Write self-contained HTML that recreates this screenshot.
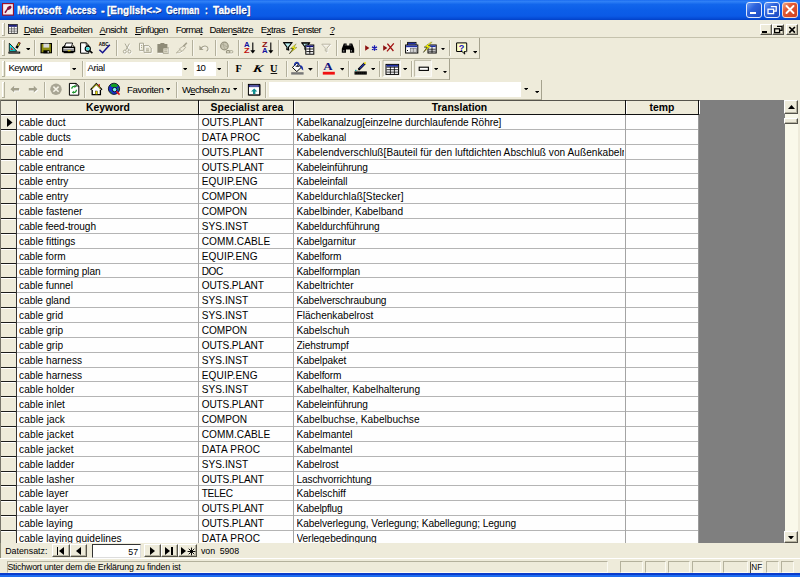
<!DOCTYPE html>
<html><head><meta charset="utf-8"><title>Microsoft Access</title>
<style>
html,body{margin:0;padding:0}
body{width:800px;height:577px;overflow:hidden;background:#EEEBDA;font-family:'Liberation Sans',sans-serif;position:relative}
div,span,svg{position:absolute;box-sizing:border-box}
span{white-space:pre;color:#000}
</style></head>
<body>
<div style="left:0;top:0;width:800px;height:20px;background:linear-gradient(#1c6cf0 0%,#2f80f6 8%,#1266ec 22%,#0c5ee8 50%,#0b5ae6 80%,#0448d2 95%,#0340c4 100%)"></div>
<svg style="left:2px;top:3px" width="12" height="12.7" viewBox="0 0 13 13" preserveAspectRatio="none"><rect x="0" y="0" width="13" height="13" fill="#98102c"/><rect x="1.2" y="1.2" width="10.6" height="10.6" fill="#f7eef0"/><path d="M2.5 9.5 L5 6.5 L6 4 L9 2.5 L10.5 4 L9 6.5 L6 7.5 L4 10.5 Z" fill="#86103c"/></svg>
<span style="left:17px;top:3px;font-size:11px;line-height:14px;font-weight:bold;color:#fff;transform:scaleX(0.8949);transform-origin:0 0;text-shadow:1px 1px 0 #0a2a80;-webkit-text-stroke:0.3px #fff">Microsoft</span>
<span style="left:66px;top:3px;font-size:11px;line-height:14px;font-weight:bold;color:#fff;transform:scaleX(0.7861);transform-origin:0 0;text-shadow:1px 1px 0 #0a2a80;-webkit-text-stroke:0.3px #fff">Access</span>
<span style="left:100.6px;top:3px;font-size:11px;line-height:14px;font-weight:bold;color:#fff;transform:scaleX(1.0077);transform-origin:0 0;text-shadow:1px 1px 0 #0a2a80;-webkit-text-stroke:0.3px #fff">-</span>
<span style="left:107px;top:3px;font-size:11px;line-height:14px;font-weight:bold;color:#fff;transform:scaleX(0.9064);transform-origin:0 0;text-shadow:1px 1px 0 #0a2a80;-webkit-text-stroke:0.3px #fff">[English&lt;-&gt;</span>
<span style="left:166px;top:3px;font-size:11px;line-height:14px;font-weight:bold;color:#fff;transform:scaleX(0.8009);transform-origin:0 0;text-shadow:1px 1px 0 #0a2a80;-webkit-text-stroke:0.3px #fff">German</span>
<span style="left:204.8px;top:3px;font-size:11px;line-height:14px;font-weight:bold;color:#fff;transform:scaleX(0.7626);transform-origin:0 0;text-shadow:1px 1px 0 #0a2a80;-webkit-text-stroke:0.3px #fff">:</span>
<span style="left:213px;top:3px;font-size:11px;line-height:14px;font-weight:bold;color:#fff;transform:scaleX(0.9150);transform-origin:0 0;text-shadow:1px 1px 0 #0a2a80;-webkit-text-stroke:0.3px #fff">Tabelle]</span>
<div style="left:746px;top:2px;width:16px;height:16px;border:1px solid #dfe8fb;border-radius:3px;background:linear-gradient(135deg,#6c9cf4 0%,#2c62dc 40%,#1c48c0 100%)"></div>
<div style="left:764px;top:2px;width:16px;height:16px;border:1px solid #dfe8fb;border-radius:3px;background:linear-gradient(135deg,#6c9cf4 0%,#2c62dc 40%,#1c48c0 100%)"></div>
<div style="left:782px;top:2px;width:16px;height:16px;border:1px solid #f6d8cc;border-radius:3px;background:linear-gradient(135deg,#f0a888 0%,#e25a35 35%,#cc4020 100%)"></div>
<div style="left:750px;top:12px;width:5.5px;height:2.2px;background:#fff;"></div>
<svg style="left:764px;top:2px" width="16" height="16" viewBox="0 0 16 16"><path d="M6.8 4.6h5.4v4.6h-2.2" fill="none" stroke="#fff" stroke-width="1.3"/><rect x="4" y="7.2" width="5.6" height="4.400" fill="none" stroke="#fff" stroke-width="1.3"/></svg>
<svg style="left:782px;top:2px" width="16" height="16" viewBox="0 0 16 16"><path d="M4.5 4l7 7M11.5 4l-7 7" stroke="#fff" stroke-width="1.9" stroke-linecap="round"/></svg>
<div style="left:1.5px;top:22.5px;width:1px;height:12.5px;background:#fff;"></div>
<div style="left:2.5px;top:22.5px;width:1.2px;height:1px;background:#fff;"></div>
<div style="left:3.6px;top:22.5px;width:1px;height:13px;background:#b4b19c;"></div>
<div style="left:1.5px;top:35px;width:3px;height:1px;background:#b4b19c;"></div>
<svg style="left:8.300px;top:23.800px" width="9.800" height="9.800" viewBox="0 0 11 11"><rect x="0.5" y="0.5" width="10" height="10" fill="#fff" stroke="#222" stroke-width="1"/><rect x="1" y="1" width="9" height="2.2" fill="#20207c"/><path d="M1 5.5h9M1 8h9M4 3v7.5M7 3v7.5" stroke="#444" stroke-width="0.8"/></svg>
<span style="left:23.7px;top:23px;font-size:9.6px;line-height:13px;letter-spacing:-0.621px"><u>D</u>atei</span>
<span style="left:50.6px;top:23px;font-size:9.6px;line-height:13px;letter-spacing:-0.461px"><u>B</u>earbeiten</span>
<span style="left:99.6px;top:23px;font-size:9.6px;line-height:13px;letter-spacing:-0.596px"><u>A</u>nsicht</span>
<span style="left:135px;top:23px;font-size:9.6px;line-height:13px;letter-spacing:-0.647px"><u>E</u>infügen</span>
<span style="left:175.7px;top:23px;font-size:9.6px;line-height:13px;letter-spacing:-0.632px">Forma<u>t</u></span>
<span style="left:209.4px;top:23px;font-size:9.6px;line-height:13px;letter-spacing:-0.493px">Daten<u>s</u>ätze</span>
<span style="left:260.8px;top:23px;font-size:9.6px;line-height:13px;letter-spacing:-0.501px">E<u>x</u>tras</span>
<span style="left:292.6px;top:23px;font-size:9.6px;line-height:13px;letter-spacing:-0.562px"><u>F</u>enster</span>
<span style="left:329.8px;top:23px;font-size:9.6px;line-height:13px;letter-spacing:-0.844px"><u>?</u></span>
<div style="left:759.5px;top:23.5px;width:12.2px;height:11.4px;background:#EEEBDA;border-top:1px solid #fff;border-left:1px solid #fff;border-right:1px solid #55534a;border-bottom:1px solid #55534a;box-shadow:inset -1px -1px 0 #b5b2a0"></div>
<div style="left:771.7px;top:23.5px;width:12.3px;height:11.4px;background:#EEEBDA;border-top:1px solid #fff;border-left:1px solid #fff;border-right:1px solid #55534a;border-bottom:1px solid #55534a;box-shadow:inset -1px -1px 0 #b5b2a0"></div>
<div style="left:785.5px;top:23.5px;width:12.3px;height:11.4px;background:#EEEBDA;border-top:1px solid #fff;border-left:1px solid #fff;border-right:1px solid #55534a;border-bottom:1px solid #55534a;box-shadow:inset -1px -1px 0 #b5b2a0"></div>
<div style="left:762.3px;top:31.3px;width:4.8px;height:1.7px;background:#000;"></div>
<svg style="left:771.7px;top:23.5px" width="13" height="12" viewBox="0 0 13 12"><path d="M5 2.3h5v4h-2" fill="none" stroke="#000" stroke-width="1.3"/><rect x="2.6" y="4.8" width="5" height="3.8" fill="none" stroke="#000" stroke-width="1.3"/></svg>
<svg style="left:785.5px;top:23.5px" width="13" height="12" viewBox="0 0 13 12"><path d="M3.3 3l5.6 5.6M8.9 3L3.3 8.6" stroke="#000" stroke-width="1.7"/></svg>
<div style="left:0px;top:37px;width:800px;height:1px;background:#c5c2ad;"></div>
<div style="left:0px;top:57.5px;width:479.5px;height:1px;background:#b4b19c;"></div>
<div style="left:479.0px;top:38px;width:1px;height:20.5px;background:#a5a28e;"></div>
<div style="left:1.5px;top:40px;width:1px;height:15.0px;background:#fff;"></div>
<div style="left:2.5px;top:40px;width:1.2px;height:1px;background:#fff;"></div>
<div style="left:3.6px;top:40px;width:1px;height:15.5px;background:#b4b19c;"></div>
<div style="left:1.5px;top:55.0px;width:3px;height:1px;background:#b4b19c;"></div>
<div style="left:0px;top:78.5px;width:449.5px;height:1px;background:#b4b19c;"></div>
<div style="left:449.0px;top:59px;width:1px;height:20.5px;background:#a5a28e;"></div>
<div style="left:1.5px;top:61px;width:1px;height:15.0px;background:#fff;"></div>
<div style="left:2.5px;top:61px;width:1.2px;height:1px;background:#fff;"></div>
<div style="left:3.6px;top:61px;width:1px;height:15.5px;background:#b4b19c;"></div>
<div style="left:1.5px;top:76.0px;width:3px;height:1px;background:#b4b19c;"></div>
<div style="left:0px;top:99px;width:541px;height:1px;background:#b4b19c;"></div>
<div style="left:540.5px;top:80px;width:1px;height:20px;background:#a5a28e;"></div>
<div style="left:1.5px;top:82px;width:1px;height:14.5px;background:#fff;"></div>
<div style="left:2.5px;top:82px;width:1.2px;height:1px;background:#fff;"></div>
<div style="left:3.6px;top:82px;width:1px;height:15px;background:#b4b19c;"></div>
<div style="left:1.5px;top:96.5px;width:3px;height:1px;background:#b4b19c;"></div>
<div style="left:34.0px;top:40px;width:1px;height:16px;background:#b3b09c;"></div>
<div style="left:35.0px;top:40px;width:1px;height:16px;background:#f8f7ee;"></div>
<div style="left:56.5px;top:40px;width:1px;height:16px;background:#b3b09c;"></div>
<div style="left:57.5px;top:40px;width:1px;height:16px;background:#f8f7ee;"></div>
<div style="left:115.5px;top:40px;width:1px;height:16px;background:#b3b09c;"></div>
<div style="left:116.5px;top:40px;width:1px;height:16px;background:#f8f7ee;"></div>
<div style="left:191.5px;top:40px;width:1px;height:16px;background:#b3b09c;"></div>
<div style="left:192.5px;top:40px;width:1px;height:16px;background:#f8f7ee;"></div>
<div style="left:214.5px;top:40px;width:1px;height:16px;background:#b3b09c;"></div>
<div style="left:215.5px;top:40px;width:1px;height:16px;background:#f8f7ee;"></div>
<div style="left:237.5px;top:40px;width:1px;height:16px;background:#b3b09c;"></div>
<div style="left:238.5px;top:40px;width:1px;height:16px;background:#f8f7ee;"></div>
<div style="left:277.5px;top:40px;width:1px;height:16px;background:#b3b09c;"></div>
<div style="left:278.5px;top:40px;width:1px;height:16px;background:#f8f7ee;"></div>
<div style="left:336.0px;top:40px;width:1px;height:16px;background:#b3b09c;"></div>
<div style="left:337.0px;top:40px;width:1px;height:16px;background:#f8f7ee;"></div>
<div style="left:358.5px;top:40px;width:1px;height:16px;background:#b3b09c;"></div>
<div style="left:359.5px;top:40px;width:1px;height:16px;background:#f8f7ee;"></div>
<div style="left:399.5px;top:40px;width:1px;height:16px;background:#b3b09c;"></div>
<div style="left:400.5px;top:40px;width:1px;height:16px;background:#f8f7ee;"></div>
<div style="left:449.0px;top:40px;width:1px;height:16px;background:#b3b09c;"></div>
<div style="left:450.0px;top:40px;width:1px;height:16px;background:#f8f7ee;"></div>
<div style="left:81.5px;top:61px;width:1px;height:16px;background:#b3b09c;"></div>
<div style="left:82.5px;top:61px;width:1px;height:16px;background:#f8f7ee;"></div>
<div style="left:227.0px;top:61px;width:1px;height:16px;background:#b3b09c;"></div>
<div style="left:228.0px;top:61px;width:1px;height:16px;background:#f8f7ee;"></div>
<div style="left:285.5px;top:61px;width:1px;height:16px;background:#b3b09c;"></div>
<div style="left:286.5px;top:61px;width:1px;height:16px;background:#f8f7ee;"></div>
<div style="left:316.5px;top:61px;width:1px;height:16px;background:#b3b09c;"></div>
<div style="left:317.5px;top:61px;width:1px;height:16px;background:#f8f7ee;"></div>
<div style="left:347.5px;top:61px;width:1px;height:16px;background:#b3b09c;"></div>
<div style="left:348.5px;top:61px;width:1px;height:16px;background:#f8f7ee;"></div>
<div style="left:378.5px;top:61px;width:1px;height:16px;background:#b3b09c;"></div>
<div style="left:379.5px;top:61px;width:1px;height:16px;background:#f8f7ee;"></div>
<div style="left:410.5px;top:61px;width:1px;height:16px;background:#b3b09c;"></div>
<div style="left:411.5px;top:61px;width:1px;height:16px;background:#f8f7ee;"></div>
<div style="left:43.5px;top:82px;width:1px;height:16px;background:#b3b09c;"></div>
<div style="left:44.5px;top:82px;width:1px;height:16px;background:#f8f7ee;"></div>
<div style="left:83.5px;top:82px;width:1px;height:16px;background:#b3b09c;"></div>
<div style="left:84.5px;top:82px;width:1px;height:16px;background:#f8f7ee;"></div>
<div style="left:175.5px;top:82px;width:1px;height:16px;background:#b3b09c;"></div>
<div style="left:176.5px;top:82px;width:1px;height:16px;background:#f8f7ee;"></div>
<div style="left:241.5px;top:82px;width:1px;height:16px;background:#b3b09c;"></div>
<div style="left:242.5px;top:82px;width:1px;height:16px;background:#f8f7ee;"></div>
<div style="left:264.5px;top:82px;width:1px;height:16px;background:#b3b09c;"></div>
<div style="left:265.5px;top:82px;width:1px;height:16px;background:#f8f7ee;"></div>
<div style="left:6px;top:61.8px;width:64px;height:14.6px;background:#fff"></div>
<span style="left:8.6px;top:61.599999999999994px;font-size:9.6px;line-height:12px;letter-spacing:-0.618px;">Keyword</span>
<div style="left:86px;top:61.8px;width:95.5px;height:14.6px;background:#fff"></div>
<span style="left:87.6px;top:61.599999999999994px;font-size:9.6px;line-height:12px;letter-spacing:-0.441px;">Arial</span>
<div style="left:194px;top:61.8px;width:21.5px;height:14.6px;background:#fff"></div>
<span style="left:196px;top:61.599999999999994px;font-size:9.6px;line-height:12px;letter-spacing:-0.936px;">10</span>
<div style="left:269px;top:82.3px;width:252px;height:14.6px;background:#fff"></div>
<span style="left:127px;top:83.5px;font-size:9.6px;line-height:12px;letter-spacing:-0.389px;">Favoriten</span>
<span style="left:182px;top:83.500px;font-size:9.600px;line-height:12px;letter-spacing:-0.659px">W<u>e</u>chseln zu</span>
<svg style="left:25.6px;top:47.8px" width="4.6" height="2.5999999999999996" viewBox="0 0 4.6 2.5999999999999996"><path d="M0 0h4.6L2.3 2.5999999999999996z" fill="#000"/></svg>
<svg style="left:441px;top:48px" width="4" height="2.3" viewBox="0 0 4 2.3"><path d="M0 0h4L2.0 2.3z" fill="#000"/></svg>
<svg style="left:472.6px;top:51px" width="4.4" height="2.5" viewBox="0 0 4.4 2.5"><path d="M0 0h4.4L2.2 2.5z" fill="#000"/></svg>
<svg style="left:71.8px;top:67.8px" width="4.4" height="2.5" viewBox="0 0 4.4 2.5"><path d="M0 0h4.4L2.2 2.5z" fill="#000"/></svg>
<svg style="left:183px;top:67.8px" width="4.4" height="2.5" viewBox="0 0 4.4 2.5"><path d="M0 0h4.4L2.2 2.5z" fill="#000"/></svg>
<svg style="left:217px;top:67.8px" width="4.4" height="2.5" viewBox="0 0 4.4 2.5"><path d="M0 0h4.4L2.2 2.5z" fill="#000"/></svg>
<svg style="left:308px;top:68.2px" width="4.8" height="2.6999999999999997" viewBox="0 0 4.8 2.6999999999999997"><path d="M0 0h4.8L2.4 2.6999999999999997z" fill="#000"/></svg>
<svg style="left:339.6px;top:68.2px" width="4.6" height="2.5999999999999996" viewBox="0 0 4.6 2.5999999999999996"><path d="M0 0h4.6L2.3 2.5999999999999996z" fill="#000"/></svg>
<svg style="left:371.2px;top:68px" width="4.2" height="2.4" viewBox="0 0 4.2 2.4"><path d="M0 0h4.2L2.1 2.4z" fill="#000"/></svg>
<svg style="left:402.6px;top:68px" width="4.2" height="2.4" viewBox="0 0 4.2 2.4"><path d="M0 0h4.2L2.1 2.4z" fill="#000"/></svg>
<svg style="left:433.8px;top:68px" width="4.2" height="2.4" viewBox="0 0 4.2 2.4"><path d="M0 0h4.2L2.1 2.4z" fill="#000"/></svg>
<svg style="left:442.9px;top:70.7px" width="4" height="2.3" viewBox="0 0 4 2.3"><path d="M0 0h4L2.0 2.3z" fill="#000"/></svg>
<svg style="left:166px;top:88.2px" width="4.2" height="2.4" viewBox="0 0 4.2 2.4"><path d="M0 0h4.2L2.1 2.4z" fill="#000"/></svg>
<svg style="left:233px;top:88.2px" width="4.2" height="2.4" viewBox="0 0 4.2 2.4"><path d="M0 0h4.2L2.1 2.4z" fill="#000"/></svg>
<svg style="left:524px;top:88px" width="4.2" height="2.4" viewBox="0 0 4.2 2.4"><path d="M0 0h4.2L2.1 2.4z" fill="#000"/></svg>
<svg style="left:535px;top:91px" width="4.2" height="2.4" viewBox="0 0 4.2 2.4"><path d="M0 0h4.2L2.1 2.4z" fill="#000"/></svg>
<svg style="left:0;top:0" width="800" height="577" viewBox="0 0 800 577"><path d="M9.3 43.2L9.3 51.2L16.8 51.2Z" fill="#10f4f4" stroke="#000" stroke-width="0.850"/><path d="M10.700 46.800v3.200h3z" fill="#d02020"/><rect x="8.4" y="51.6" width="11.8" height="2" fill="#000"/><rect x="9.2" y="52.3" width="10" height="0.5" fill="#999"/><path d="M19.6 42.6L16.4 48.2" stroke="#000" stroke-width="2.4"/><path d="M19.3 43.2L17.8 45.8" stroke="#e8e020" stroke-width="1.2"/><path d="M19.9 42.3l-.5.9" stroke="#c02020" stroke-width="1.6"/><rect x="40.5" y="43" width="11.5" height="10.3" fill="#000"/><rect x="41.6" y="44" width="9.3" height="8.3" fill="#8c8c10"/><rect x="43.4" y="43.6" width="5.8" height="4" fill="#d8d8d8"/><rect x="43.4" y="50.3" width="6.2" height="3" fill="#000"/><rect x="47.6" y="51" width="1.2" height="1.7" fill="#e8e8e8"/><path d="M65.8 43h6.8l-1.2 4h-7z" fill="#fff" stroke="#000" stroke-width="0.9"/><path d="M62.6 47.4h12v4.200h-12z" fill="#8c8c8c" stroke="#000" stroke-width="1.200"/><path d="M63.6 51.6h10v1.6h-10z" fill="#000"/><rect x="63.600" y="48.200" width="10" height="0.900" fill="#e8e8e8"/><rect x="67.8" y="50.3" width="2.6" height="1" fill="#e8e000"/><path d="M62.8 47.4l2-2.2M74.4 47.4l-1.4-2.2" stroke="#000" stroke-width="0.9"/><path d="M80.6 42.8h5.6l2.6 2.6v7.8h-8.2z" fill="#fff" stroke="#000" stroke-width="1"/><path d="M86.2 42.8v2.6h2.6" fill="none" stroke="#000" stroke-width="0.8"/><circle cx="87.8" cy="48.8" r="2.6" fill="#a0f0f0" stroke="#000" stroke-width="1.1"/><circle cx="87.6" cy="48.6" r="1.2" fill="#20d8e0"/><path d="M89.8 50.8l2.6 2.4" stroke="#000" stroke-width="1.6"/><text x="98.8" y="46.4" font-family="Liberation Sans,sans-serif" font-size="4.6" font-weight="bold" textLength="9.6" lengthAdjust="spacingAndGlyphs">ABC</text><path d="M99.4 49.8l3.2 3 7.2-8" fill="none" stroke="#10108c" stroke-width="1.5"/><g fill="none" stroke="#ffffff" stroke-width="0.9" transform="translate(0.8 0.8)"><path d="M125 43.6l3.6 6.4M129.4 43.6l-3.6 6.4"/><circle cx="124.8" cy="51.6" r="1.5"/><circle cx="129.4" cy="51.6" r="1.5"/></g><g fill="none" stroke="#a3a08c" stroke-width="0.9"><path d="M125 43.6l3.6 6.4M129.4 43.6l-3.6 6.4"/><circle cx="124.8" cy="51.6" r="1.5"/><circle cx="129.4" cy="51.6" r="1.5"/></g><g fill="none" stroke="#ffffff" stroke-width="0.9" transform="translate(0.8 0.8)"><path d="M139.5 43.2h4v7.2h-4z"/><path d="M144 45.6h4.6l2.6 2.4v4.4h-7.2z"/></g><g fill="none" stroke="#a3a08c" stroke-width="0.9"><path d="M139.5 43.2h4v7.2h-4z"/><path d="M141 45.5h1M141 47.5h1"/><path d="M144 45.6h4.6l2.6 2.4v4.4h-7.2z"/><path d="M146 49h3M146 50.8h3"/></g><rect x="157.4" y="44" width="10" height="8.8" fill="#8e8b78"/><rect x="160.4" y="43" width="4" height="1.8" fill="#8e8b78"/><rect x="163" y="48" width="5.6" height="5.2" fill="#e9e6d4" stroke="#8e8b78" stroke-width="0.8"/><path d="M164.2 49.8h3.2M164.2 51.4h3.2" stroke="#8e8b78" stroke-width="0.6"/><path d="M158 53.4h5M168.9 48v5.6" stroke="#ffffff" stroke-width="0.7"/><path d="M186.8 42.8l-3.4 3.6" stroke="#a3a08c" stroke-width="1.6"/><path d="M184 45.6l-4.6 3.2 2.6 2.8 3.6-4.2z" fill="none" stroke="#a3a08c" stroke-width="0.8"/><path d="M180 49.6l-3.6 3.2 2.8.2 2.6-1.8" fill="none" stroke="#a3a08c" stroke-width="0.8"/><path d="M177 53.8l3-.2 2.8-2" stroke="#ffffff" stroke-width="0.7" fill="none"/><path d="M200.6 48.6c2.4-3.4 6.4-3.6 7.4-.4 .4 1.400-.4 2.400-1.400 3" fill="none" stroke="#ffffff" stroke-width="1" transform="translate(0.8 0.8)"/><path d="M200.6 48.8c2.4-3.600 6.400-3.800 7.400-.6 .4 1.400-.4 2.400-1.400 3" fill="none" stroke="#a3a08c" stroke-width="1.1"/><path d="M199.400 45.600v4.400h4.200z" fill="#a3a08c"/><circle cx="224.400" cy="46" r="3.800" fill="#c9c6b2" stroke="#96937e" stroke-width="1.200"/><path d="M221.4 45c1.600-1 3-.4 3.600.6s1.600 1.200 2.800.4M223.400 42.800c-.6 2 .4 4.400 1.800 6.400" fill="none" stroke="#a3a08c" stroke-width="0.7"/><rect x="226.400" y="50.600" width="3.400" height="2.400" rx="1" fill="none" stroke="#96937e" stroke-width="1.100"/><rect x="229.400" y="50.600" width="3.400" height="2.400" rx="1" fill="none" stroke="#a3a08c" stroke-width="0.9"/><path d="M227 54h6" stroke="#ffffff" stroke-width="0.6"/><text x="244" y="47.3" font-family="Liberation Sans,sans-serif" font-size="6.8" font-weight="bold" fill="#1010a0" textLength="5.6" lengthAdjust="spacingAndGlyphs">A</text><text x="244" y="53.3" font-family="Liberation Sans,sans-serif" font-size="6.8" font-weight="bold" fill="#c01010" textLength="5.600" lengthAdjust="spacingAndGlyphs">Z</text><path d="M252.8 42.400v8.600" stroke="#000" stroke-width="1.1"/><path d="M250.3 50.200h5l-2.500 3.300z" fill="#000"/><text x="262" y="47.3" font-family="Liberation Sans,sans-serif" font-size="6.8" font-weight="bold" fill="#901010" textLength="5.6" lengthAdjust="spacingAndGlyphs">Z</text><text x="262" y="53.3" font-family="Liberation Sans,sans-serif" font-size="6.8" font-weight="bold" fill="#1010a0" textLength="5.600" lengthAdjust="spacingAndGlyphs">A</text><path d="M270.8 42.400v8.600" stroke="#000" stroke-width="1.1"/><path d="M268.3 50.200h5l-2.500 3.300z" fill="#000"/><path d="M283.800 42.800h8l-3.300 4.400v2.600l-1.500-.8v-1.800z" fill="#b8ecec" stroke="#000" stroke-width="1.100"/><path d="M283.300 42.600h9" stroke="#000" stroke-width="1.100"/><path d="M286.600 48.400v1.400h2.800" fill="none" stroke="#000" stroke-width="0.800"/><path d="M296.200 43.800l-5.600 4.600h2.800l-4 5.200 7.600-6.200h-3z" fill="#ffff00" stroke="#333" stroke-width="0.3"/><path d="M290.600 48.700h2.800l-4 5.200" fill="none" stroke="#000" stroke-width="0.500"/><path d="M302 43h7.400l-3.100 4v3l-1.400-.8v-2.200z" fill="#b8ecec" stroke="#000" stroke-width="1.100"/><path d="M301.500 42.900h8.400" stroke="#000" stroke-width="1.100"/><rect x="305.800" y="45" width="8" height="9.200" fill="#fff" stroke="#000" stroke-width="1"/><rect x="306.300" y="45.500" width="7" height="1.600" fill="#10107c"/><path d="M306.300 49h7M306.300 51.600h7M309.800 47.200v6.600" stroke="#000" stroke-width="0.9"/><path d="M321.800 44.200h8.600l-3.500 4v3.800l-1.600-1v-2.800z" fill="none" stroke="#ffffff" stroke-width="0.9" transform="translate(0.8 0.8)"/><path d="M321.800 44.200h8.600l-3.500 4v3.800l-1.600-1v-2.800z" fill="none" stroke="#b4b19e" stroke-width="0.9"/><path d="M343.800 43.400h2.800v2h2.800v-2h2.800l2 5.400v4h-4.200v-3.400h-4v3.400h-4.200v-4z" fill="#000"/><rect x="343.300" y="50.400" width="1" height="1" fill="#fff"/><rect x="350.800" y="50.400" width="1" height="1" fill="#fff"/><rect x="344.800" y="44.600" width="0.800" height="0.800" fill="#ccc"/><rect x="350.400" y="44.600" width="0.800" height="0.800" fill="#ccc"/><path d="M365.200 45.200l4.200 2.800-4.200 2.800z" fill="#8c1010"/><path d="M374.500 45.300v5.400M372 46.900l5 2.800M377 46.900l-5 2.800" stroke="#1818b0" stroke-width="1.300"/><path d="M383.200 45.200l4.200 2.800-4.200 2.800z" fill="#8c1010"/><path d="M387.400 43.600l6 7.400M393.800 43.400l-6.800 8" stroke="#a01010" stroke-width="1.300"/><rect x="407.600" y="42.400" width="8.400" height="7" fill="#fff" stroke="#000" stroke-width="0.900"/><rect x="408" y="42.800" width="7.600" height="1.800" fill="#2030a8"/><rect x="405.600" y="45" width="12.200" height="8" fill="#fff" stroke="#000" stroke-width="1"/><rect x="406.100" y="45.500" width="11.200" height="1.700" fill="#2030a8"/><rect x="410.200" y="48.200" width="6.400" height="4" fill="#d0d0d0" stroke="#555" stroke-width="0.500"/><path d="M413.400 48.200v4" stroke="#555" stroke-width="0.500"/><rect x="407" y="50" width="1" height="1" fill="#000"/><rect x="428" y="45" width="8.200" height="8" fill="#fff" stroke="#000" stroke-width="1"/><rect x="428.500" y="45.500" width="7.200" height="1.600" fill="#2030a8"/><path d="M428.500 49.200h7.200M428.500 51.200h7.200M432 47.200v5.600" stroke="#000" stroke-width="0.800"/><path d="M430.800 42.200l-6.600 4.800h3l-3.800 5.200 7.600-6.200h-3l4.200-3.800z" fill="#ffff00" stroke="#333" stroke-width="0.3"/><path d="M424.200 47.300h3l-3.800 5.200" fill="none" stroke="#000" stroke-width="0.500"/><path d="M456.600 42.900h10v8.600h-2.400l.6 2.600-2.800-2.600h-5.400z" fill="#ffffc8" stroke="#000" stroke-width="1"/><path d="M466.900 43.600v8.200h-2" fill="none" stroke="#666" stroke-width="0.700"/><text x="458.800" y="50.700" font-family="Liberation Sans,sans-serif" font-size="9.200" font-weight="bold" fill="#1818c0">?</text><text x="235.600" y="72" font-family="Liberation Serif,serif" font-size="10.400" font-weight="bold">F</text><text x="252.600" y="72" font-family="Liberation Serif,serif" font-size="10.400" font-weight="bold" font-style="italic" textLength="9.600" lengthAdjust="spacingAndGlyphs" transform="skewX(-12) translate(15.3 0)">K</text><text x="270" y="72" font-family="Liberation Serif,serif" font-size="10.400" font-weight="bold">U</text><rect x="270.600" y="73" width="6.600" height="0.900" fill="#000"/><path d="M296.800 63.200l4.400 4.200-4.400 4.200-4.400-4.200z" fill="#fff" stroke="#000" stroke-width="1"/><path d="M294.800 65.600c-.8-3.600 4-4.600 4.200-.4" fill="none" stroke="#1830a8" stroke-width="1.500"/><path d="M299.800 65.200c2.400 0 3.400 1.600 3.400 5.400-1.800-1.200-2.600-3.200-3.400-5.400z" fill="#1830a8"/><path d="M295.200 66.800l2.400-2 2 2.200z" fill="#223"/><rect x="291.200" y="72.200" width="12.400" height="2.400" fill="#777"/><text x="323.200" y="70.200" font-family="Liberation Serif,serif" font-size="10.800" font-weight="bold" fill="#10107c" textLength="9.400" lengthAdjust="spacingAndGlyphs">A</text><rect x="322.800" y="71.800" width="12" height="2.800" fill="#f01010"/><rect x="354.500" y="71.400" width="12.300" height="3.200" fill="#000"/><path d="M355.300 73h10.700" stroke="#666" stroke-width="0.500" stroke-dasharray="1 1"/><path d="M364.800 63.400l-6.200 6.200" stroke="#000" stroke-width="2.400"/><path d="M364.200 64l-4.600 4.600" stroke="#2838b8" stroke-width="1.100"/><path d="M365.600 62.400l-1.200 1.300" stroke="#f0e000" stroke-width="1.600"/><path d="M357.800 70.300l1-.8" stroke="#000" stroke-width="1"/><rect x="355" y="69.800" width="1.600" height="1.200" fill="#20a0a0"/><rect x="383" y="60.300" width="17.400" height="16.400" fill="#f4f2e8"/><path d="M383 76.700v-16.400h17.400" fill="none" stroke="#a8a690" stroke-width="0.800"/><path d="M383 76.700h17.400v-16.400" fill="none" stroke="#fff" stroke-width="0.800"/><rect x="386" y="64.400" width="12.600" height="10" fill="#fff" stroke="#000" stroke-width="1"/><rect x="386.500" y="64.900" width="11.600" height="1.800" fill="#2030a8"/><path d="M386.500 67.200h11.600M386.500 69.700h11.600M386.500 72.100h11.600M390.400 66.800v7.400M394.400 66.800v7.400" stroke="#000" stroke-width="0.800"/><rect x="414.600" y="60.300" width="16.800" height="16.400" fill="#f4f2e8"/><path d="M414.600 76.700v-16.400h16.800" fill="none" stroke="#a8a690" stroke-width="0.800"/><path d="M414.600 76.700h16.800v-16.400" fill="none" stroke="#fff" stroke-width="0.800"/><rect x="419.200" y="67.200" width="9.200" height="3.200" fill="#fff" stroke="#000" stroke-width="1.100"/><path d="M10.4 89.2l3.800-3.400v2.100h5v2.600h-5v2.100z" fill="#ffffff" transform="translate(0.8 0.8)"/><path d="M10.4 89.2l3.800-3.400v2.100h5v2.600h-5v2.100z" fill="#a3a08c" transform="translate(0 0)"/><path d="M37.6 89.2l-3.800-3.400v2.100h-5v2.600h5v2.100z" fill="#ffffff" transform="translate(0.8 0.8)"/><path d="M37.6 89.2l-3.800-3.400v2.100h-5v2.600h5v2.100z" fill="#a3a08c" transform="translate(0 0)"/><circle cx="56" cy="89.200" r="5.700" fill="#a8a594"/><path d="M53.400 86.600l5.200 5.200M58.600 86.600l-5.200 5.200" stroke="#f4f2e6" stroke-width="1.500"/><path d="M69.400 83.400h6.600l2.800 2.600v9.200h-9.400z" fill="#fff" stroke="#000" stroke-width="1"/><path d="M76 83.400v2.600h2.800" fill="none" stroke="#000" stroke-width="0.800"/><path d="M71.800 88.800c0-2 1.600-2.800 3-2.400" fill="none" stroke="#109020" stroke-width="1.200"/><path d="M74.400 85l2 1.600-2 1.400z" fill="#109020"/><path d="M76.400 89.800c0 2-1.600 2.800-3 2.400" fill="none" stroke="#109020" stroke-width="1.200"/><path d="M73.800 90.800l-2 1.600 2 1.400z" fill="#109020"/><path d="M92.200 89.400v5.200h8.200v-5.200" fill="#fff" stroke="#000" stroke-width="1.300"/><path d="M90.600 89.800l5.700-6 5.700 6" fill="#fff" stroke="#000" stroke-width="1.300"/><path d="M92.200 88.600l4.100-4.100 4.100 4.100" fill="none" stroke="#a0a020" stroke-width="1.100"/><rect x="95.400" y="91" width="2" height="3.400" fill="#f0e000" stroke="#000" stroke-width="0.400"/><path d="M99.200 84v2.400" stroke="#d01010" stroke-width="1.200"/><circle cx="114" cy="88.800" r="5.600" fill="#1830d0" stroke="#000" stroke-width="0.800"/><path d="M110.400 85.400c1.600-2 5.200-2.200 7.200-.2 .6 1.600-1.200 2-2.800 1.800s-3.400.6-4.400-1.600z" fill="#10a020"/><path d="M117.800 87.400c1 .4 1.400 1.800 1 3-.8-.6-1.200-1.800-1-3z" fill="#10a020"/><path d="M109.600 91c1 0 1.600 1.200 3 2.400-1.600-.2-2.600-1-3-2.400z" fill="#109020"/><circle cx="114.600" cy="89.600" r="2.200" fill="#80f0f0" stroke="#000" stroke-width="0.800"/><path d="M116.400 91.400l3.200 3.200" stroke="#e01010" stroke-width="1.500"/><rect x="248.400" y="84.400" width="11.400" height="10.600" fill="#fff" stroke="#000" stroke-width="1"/><rect x="248.900" y="84.900" width="10.400" height="2.200" fill="#10107c"/><rect x="249.600" y="85.700" width="9" height="0.600" fill="#fff"/><path d="M259.900 85v10.100h-11" fill="none" stroke="#000" stroke-width="0.700"/><path d="M254.200 88.400l3.200 3.200h-2v2.400h-2.400v-2.400h-2z" fill="#109090"/></svg>
<div style="left:0;top:100px;width:784.6px;height:443px;overflow:hidden;background:#fefefe">
<div style="left:699px;top:0;width:86px;height:443px;background:#7f7f7f"></div>
<div style="left:0;top:0;width:16px;height:443px;background:#EEEBDA"></div>
<div style="left:0;top:0;width:699px;height:14.5px;background:#EEEBDA"></div>
<span style="left:19.1px;top:17.0px;font-size:10.1px;line-height:12px;letter-spacing:0.054px">cable duct</span>
<span style="left:201.7px;top:17.0px;font-size:10.1px;line-height:12px;letter-spacing:-0.132px">OUTS.PLANT</span>
<span style="left:296.5px;top:17.0px;font-size:10.1px;line-height:12px;width:327.3px;overflow:hidden;letter-spacing:-0.038px">Kabelkanalzug[einzelne durchlaufende Röhre]</span>
<div style="left:16px;top:28.86px;width:683px;height:1px;background:#b4b4b4"></div>
<div style="left:0;top:28.86px;width:16px;height:1px;background:#1a1a1a"></div>
<div style="left:1px;top:15.0px;width:14px;height:1px;background:#fff"></div>
<span style="left:19.1px;top:31.86px;font-size:10.1px;line-height:12px;letter-spacing:0.064px">cable ducts</span>
<span style="left:201.7px;top:31.86px;font-size:10.1px;line-height:12px;letter-spacing:0.195px">DATA PROC</span>
<span style="left:296.5px;top:31.86px;font-size:10.1px;line-height:12px;width:327.3px;overflow:hidden;letter-spacing:-0.017px">Kabelkanal</span>
<div style="left:16px;top:43.71px;width:683px;height:1px;background:#b4b4b4"></div>
<div style="left:0;top:43.71px;width:16px;height:1px;background:#1a1a1a"></div>
<div style="left:1px;top:29.86px;width:14px;height:1px;background:#fff"></div>
<span style="left:19.1px;top:46.71px;font-size:10.1px;line-height:12px;letter-spacing:0.027px">cable end</span>
<span style="left:201.7px;top:46.71px;font-size:10.1px;line-height:12px;letter-spacing:-0.132px">OUTS.PLANT</span>
<span style="left:296.5px;top:46.71px;font-size:10.1px;line-height:12px;width:327.3px;overflow:hidden;letter-spacing:0.038px">Kabelendverschluß[Bauteil für den luftdichten Abschluß von Außenkabeln</span>
<div style="left:16px;top:58.57px;width:683px;height:1px;background:#b4b4b4"></div>
<div style="left:0;top:58.57px;width:16px;height:1px;background:#1a1a1a"></div>
<div style="left:1px;top:44.71px;width:14px;height:1px;background:#fff"></div>
<span style="left:19.1px;top:61.57px;font-size:10.1px;line-height:12px;letter-spacing:-0.040px">cable entrance</span>
<span style="left:201.7px;top:61.57px;font-size:10.1px;line-height:12px;letter-spacing:-0.132px">OUTS.PLANT</span>
<span style="left:296.5px;top:61.57px;font-size:10.1px;line-height:12px;width:327.3px;overflow:hidden;letter-spacing:-0.152px">Kabeleinführung</span>
<div style="left:16px;top:73.43px;width:683px;height:1px;background:#b4b4b4"></div>
<div style="left:0;top:73.43px;width:16px;height:1px;background:#1a1a1a"></div>
<div style="left:1px;top:59.57px;width:14px;height:1px;background:#fff"></div>
<span style="left:19.1px;top:76.43px;font-size:10.1px;line-height:12px;letter-spacing:-0.007px">cable entry</span>
<span style="left:201.7px;top:76.43px;font-size:10.1px;line-height:12px;letter-spacing:0.138px">EQUIP.ENG</span>
<span style="left:296.5px;top:76.43px;font-size:10.1px;line-height:12px;width:327.3px;overflow:hidden;letter-spacing:-0.109px">Kabeleinfall</span>
<div style="left:16px;top:88.29px;width:683px;height:1px;background:#b4b4b4"></div>
<div style="left:0;top:88.29px;width:16px;height:1px;background:#1a1a1a"></div>
<div style="left:1px;top:74.43px;width:14px;height:1px;background:#fff"></div>
<span style="left:19.1px;top:91.29px;font-size:10.1px;line-height:12px;letter-spacing:-0.007px">cable entry</span>
<span style="left:201.7px;top:91.29px;font-size:10.1px;line-height:12px;letter-spacing:-0.004px">COMPON</span>
<span style="left:296.5px;top:91.29px;font-size:10.1px;line-height:12px;width:327.3px;overflow:hidden;letter-spacing:0.104px">Kabeldurchlaß[Stecker]</span>
<div style="left:16px;top:103.14px;width:683px;height:1px;background:#b4b4b4"></div>
<div style="left:0;top:103.14px;width:16px;height:1px;background:#1a1a1a"></div>
<div style="left:1px;top:89.29px;width:14px;height:1px;background:#fff"></div>
<span style="left:19.1px;top:106.14px;font-size:10.1px;line-height:12px;letter-spacing:-0.009px">cable fastener</span>
<span style="left:201.7px;top:106.14px;font-size:10.1px;line-height:12px;letter-spacing:-0.004px">COMPON</span>
<span style="left:296.5px;top:106.14px;font-size:10.1px;line-height:12px;width:327.3px;overflow:hidden;letter-spacing:-0.033px">Kabelbinder, Kabelband</span>
<div style="left:16px;top:118.0px;width:683px;height:1px;background:#b4b4b4"></div>
<div style="left:0;top:118.0px;width:16px;height:1px;background:#1a1a1a"></div>
<div style="left:1px;top:104.14px;width:14px;height:1px;background:#fff"></div>
<span style="left:19.1px;top:121.0px;font-size:10.1px;line-height:12px;letter-spacing:-0.104px">cable feed-trough</span>
<span style="left:201.7px;top:121.0px;font-size:10.1px;line-height:12px;letter-spacing:0.071px">SYS.INST</span>
<span style="left:296.5px;top:121.0px;font-size:10.1px;line-height:12px;width:327.3px;overflow:hidden;letter-spacing:-0.138px">Kabeldurchführung</span>
<div style="left:16px;top:132.86px;width:683px;height:1px;background:#b4b4b4"></div>
<div style="left:0;top:132.86px;width:16px;height:1px;background:#1a1a1a"></div>
<div style="left:1px;top:119.0px;width:14px;height:1px;background:#fff"></div>
<span style="left:19.1px;top:135.86px;font-size:10.1px;line-height:12px;letter-spacing:0.015px">cable fittings</span>
<span style="left:201.7px;top:135.86px;font-size:10.1px;line-height:12px;letter-spacing:0.069px">COMM.CABLE</span>
<span style="left:296.5px;top:135.86px;font-size:10.1px;line-height:12px;width:327.3px;overflow:hidden;letter-spacing:-0.054px">Kabelgarnitur</span>
<div style="left:16px;top:147.71px;width:683px;height:1px;background:#b4b4b4"></div>
<div style="left:0;top:147.71px;width:16px;height:1px;background:#1a1a1a"></div>
<div style="left:1px;top:133.86px;width:14px;height:1px;background:#fff"></div>
<span style="left:19.1px;top:150.71px;font-size:10.1px;line-height:12px;letter-spacing:-0.069px">cable form</span>
<span style="left:201.7px;top:150.71px;font-size:10.1px;line-height:12px;letter-spacing:0.138px">EQUIP.ENG</span>
<span style="left:296.5px;top:150.71px;font-size:10.1px;line-height:12px;width:327.3px;overflow:hidden;letter-spacing:-0.127px">Kabelform</span>
<div style="left:16px;top:162.57px;width:683px;height:1px;background:#b4b4b4"></div>
<div style="left:0;top:162.57px;width:16px;height:1px;background:#1a1a1a"></div>
<div style="left:1px;top:148.71px;width:14px;height:1px;background:#fff"></div>
<span style="left:19.1px;top:165.57px;font-size:10.1px;line-height:12px;letter-spacing:-0.058px">cable forming plan</span>
<span style="left:201.7px;top:165.57px;font-size:10.1px;line-height:12px;letter-spacing:-0.419px">DOC</span>
<span style="left:296.5px;top:165.57px;font-size:10.1px;line-height:12px;width:327.3px;overflow:hidden;letter-spacing:-0.124px">Kabelformplan</span>
<div style="left:16px;top:177.43px;width:683px;height:1px;background:#b4b4b4"></div>
<div style="left:0;top:177.43px;width:16px;height:1px;background:#1a1a1a"></div>
<div style="left:1px;top:163.57px;width:14px;height:1px;background:#fff"></div>
<span style="left:19.1px;top:180.43px;font-size:10.1px;line-height:12px;letter-spacing:-0.058px">cable funnel</span>
<span style="left:201.7px;top:180.43px;font-size:10.1px;line-height:12px;letter-spacing:-0.132px">OUTS.PLANT</span>
<span style="left:296.5px;top:180.43px;font-size:10.1px;line-height:12px;width:327.3px;overflow:hidden;letter-spacing:0.027px">Kabeltrichter</span>
<div style="left:16px;top:192.29px;width:683px;height:1px;background:#b4b4b4"></div>
<div style="left:0;top:192.29px;width:16px;height:1px;background:#1a1a1a"></div>
<div style="left:1px;top:178.43px;width:14px;height:1px;background:#fff"></div>
<span style="left:19.1px;top:195.29px;font-size:10.1px;line-height:12px;letter-spacing:-0.064px">cable gland</span>
<span style="left:201.7px;top:195.29px;font-size:10.1px;line-height:12px;letter-spacing:0.071px">SYS.INST</span>
<span style="left:296.5px;top:195.29px;font-size:10.1px;line-height:12px;width:327.3px;overflow:hidden;letter-spacing:-0.153px">Kabelverschraubung</span>
<div style="left:16px;top:207.14px;width:683px;height:1px;background:#b4b4b4"></div>
<div style="left:0;top:207.14px;width:16px;height:1px;background:#1a1a1a"></div>
<div style="left:1px;top:193.29px;width:14px;height:1px;background:#fff"></div>
<span style="left:19.1px;top:210.14px;font-size:10.1px;line-height:12px;letter-spacing:0.024px">cable grid</span>
<span style="left:201.7px;top:210.14px;font-size:10.1px;line-height:12px;letter-spacing:0.071px">SYS.INST</span>
<span style="left:296.5px;top:210.14px;font-size:10.1px;line-height:12px;width:327.3px;overflow:hidden;letter-spacing:-0.005px">Flächenkabelrost</span>
<div style="left:16px;top:222.0px;width:683px;height:1px;background:#b4b4b4"></div>
<div style="left:0;top:222.0px;width:16px;height:1px;background:#1a1a1a"></div>
<div style="left:1px;top:208.14px;width:14px;height:1px;background:#fff"></div>
<span style="left:19.1px;top:225.0px;font-size:10.1px;line-height:12px;letter-spacing:0.024px">cable grip</span>
<span style="left:201.7px;top:225.0px;font-size:10.1px;line-height:12px;letter-spacing:-0.004px">COMPON</span>
<span style="left:296.5px;top:225.0px;font-size:10.1px;line-height:12px;width:327.3px;overflow:hidden;letter-spacing:0.004px">Kabelschuh</span>
<div style="left:16px;top:236.86px;width:683px;height:1px;background:#b4b4b4"></div>
<div style="left:0;top:236.86px;width:16px;height:1px;background:#1a1a1a"></div>
<div style="left:1px;top:223.0px;width:14px;height:1px;background:#fff"></div>
<span style="left:19.1px;top:239.86px;font-size:10.1px;line-height:12px;letter-spacing:0.024px">cable grip</span>
<span style="left:201.7px;top:239.86px;font-size:10.1px;line-height:12px;letter-spacing:-0.132px">OUTS.PLANT</span>
<span style="left:296.5px;top:239.86px;font-size:10.1px;line-height:12px;width:327.3px;overflow:hidden;letter-spacing:-0.110px">Ziehstrumpf</span>
<div style="left:16px;top:251.71px;width:683px;height:1px;background:#b4b4b4"></div>
<div style="left:0;top:251.71px;width:16px;height:1px;background:#1a1a1a"></div>
<div style="left:1px;top:237.86px;width:14px;height:1px;background:#fff"></div>
<span style="left:19.1px;top:254.71px;font-size:10.1px;line-height:12px;letter-spacing:0.003px">cable harness</span>
<span style="left:201.7px;top:254.71px;font-size:10.1px;line-height:12px;letter-spacing:0.071px">SYS.INST</span>
<span style="left:296.5px;top:254.71px;font-size:10.1px;line-height:12px;width:327.3px;overflow:hidden;letter-spacing:-0.080px">Kabelpaket</span>
<div style="left:16px;top:266.57px;width:683px;height:1px;background:#b4b4b4"></div>
<div style="left:0;top:266.57px;width:16px;height:1px;background:#1a1a1a"></div>
<div style="left:1px;top:252.71px;width:14px;height:1px;background:#fff"></div>
<span style="left:19.1px;top:269.57px;font-size:10.1px;line-height:12px;letter-spacing:0.003px">cable harness</span>
<span style="left:201.7px;top:269.57px;font-size:10.1px;line-height:12px;letter-spacing:0.138px">EQUIP.ENG</span>
<span style="left:296.5px;top:269.57px;font-size:10.1px;line-height:12px;width:327.3px;overflow:hidden;letter-spacing:-0.127px">Kabelform</span>
<div style="left:16px;top:281.43px;width:683px;height:1px;background:#b4b4b4"></div>
<div style="left:0;top:281.43px;width:16px;height:1px;background:#1a1a1a"></div>
<div style="left:1px;top:267.57px;width:14px;height:1px;background:#fff"></div>
<span style="left:19.1px;top:284.43px;font-size:10.1px;line-height:12px;letter-spacing:0.018px">cable holder</span>
<span style="left:201.7px;top:284.43px;font-size:10.1px;line-height:12px;letter-spacing:0.071px">SYS.INST</span>
<span style="left:296.5px;top:284.43px;font-size:10.1px;line-height:12px;width:327.3px;overflow:hidden;letter-spacing:-0.017px">Kabelhalter, Kabelhalterung</span>
<div style="left:16px;top:296.29px;width:683px;height:1px;background:#b4b4b4"></div>
<div style="left:0;top:296.29px;width:16px;height:1px;background:#1a1a1a"></div>
<div style="left:1px;top:282.43px;width:14px;height:1px;background:#fff"></div>
<span style="left:19.1px;top:299.29px;font-size:10.1px;line-height:12px;letter-spacing:0.035px">cable inlet</span>
<span style="left:201.7px;top:299.29px;font-size:10.1px;line-height:12px;letter-spacing:-0.132px">OUTS.PLANT</span>
<span style="left:296.5px;top:299.29px;font-size:10.1px;line-height:12px;width:327.3px;overflow:hidden;letter-spacing:-0.152px">Kabeleinführung</span>
<div style="left:16px;top:311.14px;width:683px;height:1px;background:#b4b4b4"></div>
<div style="left:0;top:311.14px;width:16px;height:1px;background:#1a1a1a"></div>
<div style="left:1px;top:297.29px;width:14px;height:1px;background:#fff"></div>
<span style="left:19.1px;top:314.14px;font-size:10.1px;line-height:12px;letter-spacing:0.101px">cable jack</span>
<span style="left:201.7px;top:314.14px;font-size:10.1px;line-height:12px;letter-spacing:-0.004px">COMPON</span>
<span style="left:296.5px;top:314.14px;font-size:10.1px;line-height:12px;width:327.3px;overflow:hidden;letter-spacing:0.029px">Kabelbuchse, Kabelbuchse</span>
<div style="left:16px;top:326.0px;width:683px;height:1px;background:#b4b4b4"></div>
<div style="left:0;top:326.0px;width:16px;height:1px;background:#1a1a1a"></div>
<div style="left:1px;top:312.14px;width:14px;height:1px;background:#fff"></div>
<span style="left:19.1px;top:329.0px;font-size:10.1px;line-height:12px;letter-spacing:0.108px">cable jacket</span>
<span style="left:201.7px;top:329.0px;font-size:10.1px;line-height:12px;letter-spacing:0.069px">COMM.CABLE</span>
<span style="left:296.5px;top:329.0px;font-size:10.1px;line-height:12px;width:327.3px;overflow:hidden;letter-spacing:-0.002px">Kabelmantel</span>
<div style="left:16px;top:340.86px;width:683px;height:1px;background:#b4b4b4"></div>
<div style="left:0;top:340.86px;width:16px;height:1px;background:#1a1a1a"></div>
<div style="left:1px;top:327.0px;width:14px;height:1px;background:#fff"></div>
<span style="left:19.1px;top:343.86px;font-size:10.1px;line-height:12px;letter-spacing:0.108px">cable jacket</span>
<span style="left:201.7px;top:343.86px;font-size:10.1px;line-height:12px;letter-spacing:0.195px">DATA PROC</span>
<span style="left:296.5px;top:343.86px;font-size:10.1px;line-height:12px;width:327.3px;overflow:hidden;letter-spacing:-0.002px">Kabelmantel</span>
<div style="left:16px;top:355.71px;width:683px;height:1px;background:#b4b4b4"></div>
<div style="left:0;top:355.71px;width:16px;height:1px;background:#1a1a1a"></div>
<div style="left:1px;top:341.86px;width:14px;height:1px;background:#fff"></div>
<span style="left:19.1px;top:358.71px;font-size:10.1px;line-height:12px;letter-spacing:0.018px">cable ladder</span>
<span style="left:201.7px;top:358.71px;font-size:10.1px;line-height:12px;letter-spacing:0.071px">SYS.INST</span>
<span style="left:296.5px;top:358.71px;font-size:10.1px;line-height:12px;width:327.3px;overflow:hidden;letter-spacing:-0.082px">Kabelrost</span>
<div style="left:16px;top:370.57px;width:683px;height:1px;background:#b4b4b4"></div>
<div style="left:0;top:370.57px;width:16px;height:1px;background:#1a1a1a"></div>
<div style="left:1px;top:356.71px;width:14px;height:1px;background:#fff"></div>
<span style="left:19.1px;top:373.57px;font-size:10.1px;line-height:12px;letter-spacing:0.069px">cable lasher</span>
<span style="left:201.7px;top:373.57px;font-size:10.1px;line-height:12px;letter-spacing:-0.132px">OUTS.PLANT</span>
<span style="left:296.5px;top:373.57px;font-size:10.1px;line-height:12px;width:327.3px;overflow:hidden;letter-spacing:-0.125px">Laschvorrichtung</span>
<div style="left:16px;top:385.43px;width:683px;height:1px;background:#b4b4b4"></div>
<div style="left:0;top:385.43px;width:16px;height:1px;background:#1a1a1a"></div>
<div style="left:1px;top:371.57px;width:14px;height:1px;background:#fff"></div>
<span style="left:19.1px;top:388.43px;font-size:10.1px;line-height:12px;letter-spacing:0.047px">cable layer</span>
<span style="left:201.7px;top:388.43px;font-size:10.1px;line-height:12px;letter-spacing:-0.287px">TELEC</span>
<span style="left:296.5px;top:388.43px;font-size:10.1px;line-height:12px;width:327.3px;overflow:hidden;letter-spacing:-0.000px">Kabelschiff</span>
<div style="left:16px;top:400.29px;width:683px;height:1px;background:#b4b4b4"></div>
<div style="left:0;top:400.29px;width:16px;height:1px;background:#1a1a1a"></div>
<div style="left:1px;top:386.43px;width:14px;height:1px;background:#fff"></div>
<span style="left:19.1px;top:403.29px;font-size:10.1px;line-height:12px;letter-spacing:0.047px">cable layer</span>
<span style="left:201.7px;top:403.29px;font-size:10.1px;line-height:12px;letter-spacing:-0.132px">OUTS.PLANT</span>
<span style="left:296.5px;top:403.29px;font-size:10.1px;line-height:12px;width:327.3px;overflow:hidden;letter-spacing:-0.169px">Kabelpflug</span>
<div style="left:16px;top:415.14px;width:683px;height:1px;background:#b4b4b4"></div>
<div style="left:0;top:415.14px;width:16px;height:1px;background:#1a1a1a"></div>
<div style="left:1px;top:401.29px;width:14px;height:1px;background:#fff"></div>
<span style="left:19.1px;top:418.14px;font-size:10.1px;line-height:12px;letter-spacing:0.044px">cable laying</span>
<span style="left:201.7px;top:418.14px;font-size:10.1px;line-height:12px;letter-spacing:-0.132px">OUTS.PLANT</span>
<span style="left:296.5px;top:418.14px;font-size:10.1px;line-height:12px;width:327.3px;overflow:hidden;letter-spacing:-0.059px">Kabelverlegung, Verlegung; Kabellegung; Legung</span>
<div style="left:16px;top:430.0px;width:683px;height:1px;background:#b4b4b4"></div>
<div style="left:0;top:430.0px;width:16px;height:1px;background:#1a1a1a"></div>
<div style="left:1px;top:416.14px;width:14px;height:1px;background:#fff"></div>
<span style="left:19.1px;top:433.0px;font-size:10.1px;line-height:12px;letter-spacing:0.042px">cable laying guidelines</span>
<span style="left:201.7px;top:433.0px;font-size:10.1px;line-height:12px;letter-spacing:0.195px">DATA PROC</span>
<span style="left:296.5px;top:433.0px;font-size:10.1px;line-height:12px;width:327.3px;overflow:hidden;letter-spacing:-0.086px">Verlegebedingung</span>
<div style="left:16px;top:444.86px;width:683px;height:1px;background:#b4b4b4"></div>
<div style="left:0;top:444.86px;width:16px;height:1px;background:#1a1a1a"></div>
<div style="left:1px;top:431.0px;width:14px;height:1px;background:#fff"></div>
<div style="left:197.7px;top:14.5px;width:1px;height:443px;background:#a4a4a4"></div>
<div style="left:293.2px;top:14.5px;width:1px;height:443px;background:#a4a4a4"></div>
<div style="left:625.2px;top:14.5px;width:1px;height:443px;background:#a4a4a4"></div>
<div style="left:698px;top:14.5px;width:1px;height:443px;background:#9a9a9a"></div>
<div style="left:0;top:0;width:699px;height:1px;background:#55544c"></div>
<div style="left:0;top:13.8px;width:699px;height:1.2px;background:#111"></div>
<div style="left:15.6px;top:0;width:1.2px;height:14.5px;background:#111"></div>
<div style="left:16.8px;top:1px;width:1px;height:12.8px;background:#fff"></div>
<div style="left:197.6px;top:0;width:1.2px;height:14.5px;background:#111"></div>
<div style="left:198.79999999999998px;top:1px;width:1px;height:12.8px;background:#fff"></div>
<div style="left:293.1px;top:0;width:1.2px;height:14.5px;background:#111"></div>
<div style="left:294.3px;top:1px;width:1px;height:12.8px;background:#fff"></div>
<div style="left:625.1px;top:0;width:1.2px;height:14.5px;background:#111"></div>
<div style="left:626.3000000000001px;top:1px;width:1px;height:12.8px;background:#fff"></div>
<div style="left:698.1px;top:0;width:1.2px;height:14.5px;background:#111"></div>
<div style="left:699.3000000000001px;top:1px;width:1px;height:12.8px;background:#fff"></div>
<div style="left:15.6px;top:0;width:1.3px;height:443px;background:#333"></div>
<div style="left:0;top:0;width:1px;height:443px;background:#77756a"></div>
<span style="left:18px;top:1.9px;width:180px;text-align:center;font-size:10.4px;line-height:12px;font-weight:bold">Keyword</span>
<span style="left:199px;top:1.9px;width:96px;text-align:center;font-size:10.4px;line-height:12px;font-weight:bold">Specialist area</span>
<span style="left:294px;top:1.9px;width:331px;text-align:center;font-size:10.4px;line-height:12px;font-weight:bold">Translation</span>
<span style="left:626px;top:1.9px;width:72px;text-align:center;font-size:10.4px;line-height:12px;font-weight:bold">temp</span>
<svg style="left:6.5px;top:17.5px" width="6" height="9" viewBox="0 0 6 9"><path d="M0 0L5.5 4.5L0 9z" fill="#000"/></svg>
</div>
<div style="left:784.6px;top:100px;width:13.4px;height:443px;background:#faf9ea"></div>
<div style="left:784px;top:100px;width:14px;height:13.5px;background:#EEEBDA;border-top:1px solid #fff;border-left:1px solid #fff;border-right:1px solid #55534a;border-bottom:1px solid #55534a;box-shadow:inset -1px -1px 0 #b5b2a0"></div>
<div style="left:784px;top:530.5px;width:14px;height:12.5px;background:#EEEBDA;border-top:1px solid #fff;border-left:1px solid #fff;border-right:1px solid #55534a;border-bottom:1px solid #55534a;box-shadow:inset -1px -1px 0 #b5b2a0"></div>
<div style="left:784px;top:117.5px;width:14px;height:6.5px;background:#EEEBDA;border-top:1px solid #fff;border-left:1px solid #fff;border-right:1px solid #55534a;border-bottom:1px solid #55534a;box-shadow:inset -1px -1px 0 #b5b2a0"></div>
<svg style="left:787.5px;top:104.5px" width="7" height="4" viewBox="0 0 7 4"><path d="M3.5 0L7 4H0z" fill="#000"/></svg>
<svg style="left:788px;top:535.5px" width="6" height="3.5" viewBox="0 0 6 3.5"><path d="M0 0h6L3 3.5z" fill="#000"/></svg>
<div style="left:0px;top:543px;width:1.3px;height:15px;background:#8e8c76;"></div>
<span style="left:5.2px;top:545px;font-size:8.8px;line-height:12px;letter-spacing:0.024px;">Datensatz:</span>
<div style="left:52px;top:543.5px;width:18px;height:13.5px;background:#EEEBDA;border-top:1px solid #fff;border-left:1px solid #fff;border-right:1px solid #55534a;border-bottom:1px solid #55534a;box-shadow:inset -1px -1px 0 #b5b2a0"></div>
<div style="left:70px;top:543.5px;width:17.2px;height:13.5px;background:#EEEBDA;border-top:1px solid #fff;border-left:1px solid #fff;border-right:1px solid #55534a;border-bottom:1px solid #55534a;box-shadow:inset -1px -1px 0 #b5b2a0"></div>
<div style="left:143.7px;top:543.5px;width:17px;height:13.5px;background:#EEEBDA;border-top:1px solid #fff;border-left:1px solid #fff;border-right:1px solid #55534a;border-bottom:1px solid #55534a;box-shadow:inset -1px -1px 0 #b5b2a0"></div>
<div style="left:160.7px;top:543.5px;width:17.6px;height:13.5px;background:#EEEBDA;border-top:1px solid #fff;border-left:1px solid #fff;border-right:1px solid #55534a;border-bottom:1px solid #55534a;box-shadow:inset -1px -1px 0 #b5b2a0"></div>
<div style="left:178.3px;top:543.5px;width:18.7px;height:13.5px;background:#EEEBDA;border-top:1px solid #fff;border-left:1px solid #fff;border-right:1px solid #55534a;border-bottom:1px solid #55534a;box-shadow:inset -1px -1px 0 #b5b2a0"></div>
<div style="left:91.5px;top:544px;width:49.5px;height:13.5px;background:#fff;border-top:1.5px solid #333;border-left:1.5px solid #333;border-bottom:1px solid #ddd;border-right:1px solid #ddd"></div>
<span style="left:128.3px;top:545.5px;font-size:8.8px;line-height:12px;letter-spacing:0.102px;">57</span>
<span style="left:201px;top:545px;font-size:8.8px;line-height:12px;letter-spacing:-0.073px;">von  5908</span>
<div style="left:56.5px;top:546.5px;width:1.5px;height:8px;background:#000;"></div>
<svg style="left:59px;top:546.5px" width="5" height="8" viewBox="0 0 5 8"><path d="M5 0L0 4.0L5 8z" fill="#000"/></svg>
<svg style="left:75.5px;top:546.5px" width="5" height="8" viewBox="0 0 5 8"><path d="M5 0L0 4.0L5 8z" fill="#000"/></svg>
<svg style="left:150px;top:546.5px" width="5" height="8" viewBox="0 0 5 8"><path d="M0 0L5 4.0L0 8z" fill="#000"/></svg>
<svg style="left:165px;top:546.5px" width="5" height="8" viewBox="0 0 5 8"><path d="M0 0L5 4.0L0 8z" fill="#000"/></svg>
<div style="left:171px;top:546.5px;width:1.5px;height:8px;background:#000;"></div>
<svg style="left:180.5px;top:546.5px" width="5" height="8" viewBox="0 0 5 8"><path d="M0 0L5 4.0L0 8z" fill="#000"/></svg>
<svg style="left:186.5px;top:546.5px" width="9" height="9" viewBox="0 0 9 9"><path d="M4.5 0.6v7.8M0.6 4.5h7.800M1.700 1.700l5.600 5.600M7.300 1.700l-5.600 5.600" stroke="#000" stroke-width="0.950"/></svg>
<div style="left:0px;top:558px;width:800px;height:1px;background:#fff;"></div>
<div style="left:7px;top:561px;width:600.5px;height:12px;border-top:1px solid #b4b19c;border-left:1px solid #b4b19c;border-right:1px solid #fbfaf2;border-bottom:1px solid #fbfaf2"></div>
<div style="left:620px;top:561px;width:22.5px;height:12px;border-top:1px solid #b4b19c;border-left:1px solid #b4b19c;border-right:1px solid #fbfaf2;border-bottom:1px solid #fbfaf2"></div>
<div style="left:644.5px;top:561px;width:21.5px;height:12px;border-top:1px solid #b4b19c;border-left:1px solid #b4b19c;border-right:1px solid #fbfaf2;border-bottom:1px solid #fbfaf2"></div>
<div style="left:668px;top:561px;width:21.5px;height:12px;border-top:1px solid #b4b19c;border-left:1px solid #b4b19c;border-right:1px solid #fbfaf2;border-bottom:1px solid #fbfaf2"></div>
<div style="left:691.5px;top:561px;width:29px;height:12px;border-top:1px solid #b4b19c;border-left:1px solid #b4b19c;border-right:1px solid #fbfaf2;border-bottom:1px solid #fbfaf2"></div>
<div style="left:723px;top:561px;width:24.5px;height:12px;border-top:1px solid #b4b19c;border-left:1px solid #b4b19c;border-right:1px solid #fbfaf2;border-bottom:1px solid #fbfaf2"></div>
<div style="left:749.5px;top:561px;width:13.5px;height:12px;border-top:1px solid #b4b19c;border-left:1px solid #b4b19c;border-right:1px solid #fbfaf2;border-bottom:1px solid #fbfaf2"></div>
<div style="left:765.5px;top:561px;width:13px;height:12px;border-top:1px solid #b4b19c;border-left:1px solid #b4b19c;border-right:1px solid #fbfaf2;border-bottom:1px solid #fbfaf2"></div>
<div style="left:781px;top:561px;width:12.5px;height:12px;border-top:1px solid #b4b19c;border-left:1px solid #b4b19c;border-right:1px solid #fbfaf2;border-bottom:1px solid #fbfaf2"></div>
<span style="left:7.4px;top:561.2px;font-size:8.8px;line-height:12px;letter-spacing:-0.189px;">Stichwort unter dem die Erklärung zu finden ist</span>
<div style="left:749.5px;top:561.5px;width:1px;height:11px;background:#55534a;"></div>
<div style="left:750.5px;top:562px;width:12px;height:10.5px;background:#f6f5ec;"></div>
<span style="left:751.3px;top:562px;font-size:8.2px;line-height:11px;letter-spacing:0.039px;">NF</span>
<div style="left:0px;top:573.4px;width:800px;height:1.2px;background:#0a3ccc;"></div>
<div style="left:0px;top:574.5px;width:800px;height:2.5px;background:#1f6df0;"></div>
</body></html>
